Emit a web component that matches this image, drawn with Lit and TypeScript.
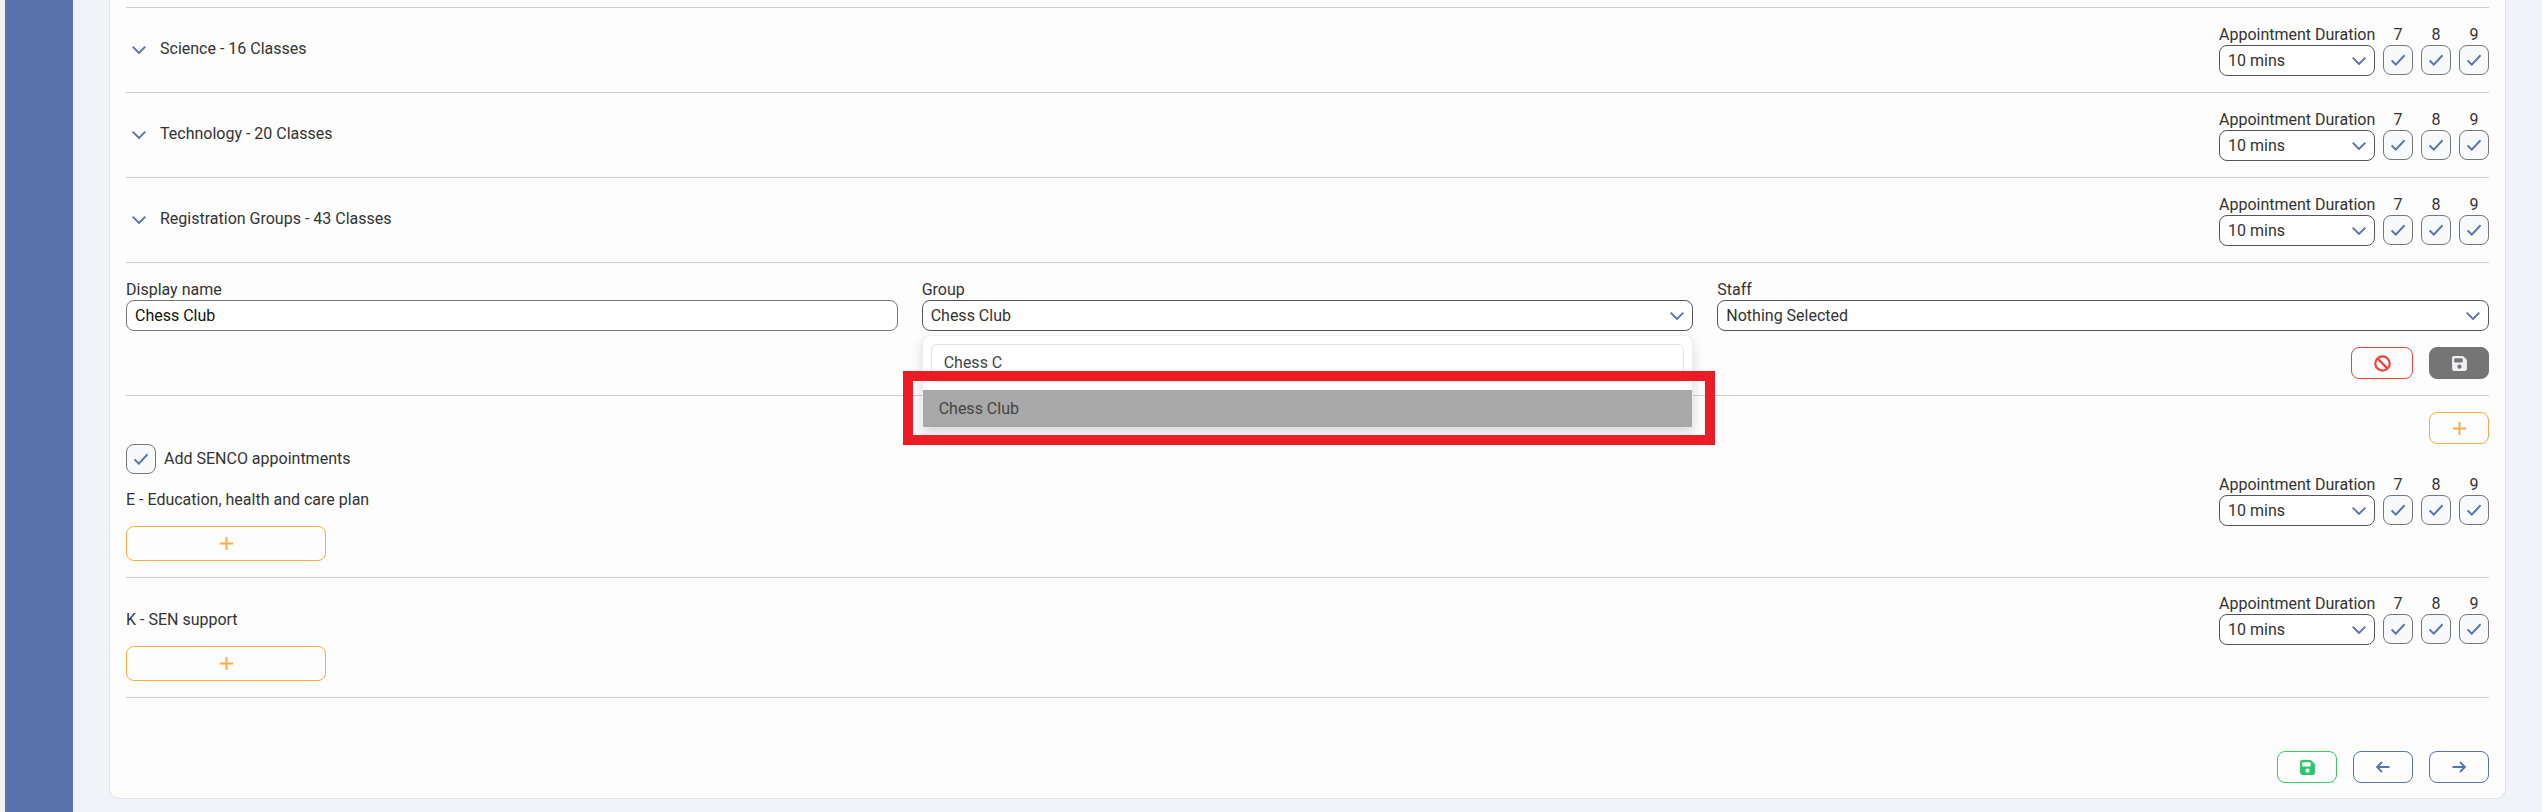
import { LitElement, html, css, svg } from "lit";
import { customElement } from "lit/decorators.js";

const chevron = html`<svg class="chev" viewBox="0 0 14 8" width="14" height="8"><path d="M.7 .7l6.3 6.3 6.3-6.3" fill="none" stroke="#5a73ae" stroke-width="1.9"/></svg>`;
const check = html`<svg viewBox="0 0 14 12" width="14" height="12"><path d="M.6 6.5l4.2 4.1L13.6 1.3" fill="none" stroke="#5a73ae" stroke-width="2"/></svg>`;
const plus = html`<svg viewBox="0 0 13 13" width="13" height="13"><path d="M6.5 0v13M0 6.5h13" fill="none" stroke="#f9ab45" stroke-width="1.9"/></svg>`;
const floppy = svg`<path fill-rule="evenodd" d="M64 32C28.7 32 0 60.7 0 96V416c0 35.3 28.7 64 64 64H384c35.3 0 64-28.7 64-64V173.3c0-17-6.7-33.3-18.7-45.3L352 50.7C340 38.7 323.7 32 306.7 32H64zm0 96c0-17.7 14.3-32 32-32H288c17.7 0 32 14.3 32 32v64c0 17.7-14.3 32-32 32H96c-17.7 0-32-14.3-32-32V128zM224 288a64 64 0 1 1 0 128 64 64 0 1 1 0-128z"/>`;

const box = html`<span class="box">${check}</span>`;

const duration = html`
  <div class="duration">
    <div class="dcol">
      <span class="lab">Appointment Duration</span>
      <div class="select small"><span>10 mins</span>${chevron}</div>
    </div>
    <div class="ccol"><span class="lab">7</span>${box}</div>
    <div class="ccol"><span class="lab">8</span>${box}</div>
    <div class="ccol"><span class="lab">9</span>${box}</div>
  </div>`;

@customElement("app-root")
export class AppRoot extends LitElement {
  static styles = css`
    :host { display: block; position: relative; width: 2542px; height: 812px; overflow: hidden; background: #f1f3f8;
      font-family: Roboto, "Liberation Sans", sans-serif; font-size: 16px; line-height: 19px; color: #333; }
    .page { display: flex; height: 812px; }
    .edge { width: 5px; background: #f3f3f3; flex: none; }
    .side { width: 68px; background: #5a73ae; flex: none; }
    .main { flex: 1; padding: 0 36px; min-width: 0; }
    .card { height: 799px; box-sizing: border-box; background: #fdfdfe; border: 1px solid #e1e3e7; border-top: 0;
      border-radius: 0 0 10px 10px; padding: 7px 16px 0; }
    .sec { border-top: 1px solid #ccc; }
    .row { height: 85px; display: flex; justify-content: space-between; box-sizing: border-box; padding-top: 17px; }
    .head { display: flex; align-items: center; height: 46px; padding-left: 6px; gap: 14px; }
    .head .chev { margin-top: 4px; }
    .duration { display: flex; gap: 8px; }
    .dcol { display: flex; flex-direction: column; width: 156px; }
    .ccol { display: flex; flex-direction: column; width: 30px; align-items: center; }
    .lab { height: 20px; white-space: nowrap; }
    .box { box-sizing: border-box; width: 30px; height: 30px; border: 1px solid #777; border-radius: 8px; background: #f8f9fb;
      display: flex; align-items: center; justify-content: center; flex: none; }
    .select { box-sizing: border-box; height: 31px; border: 1px solid #555; border-radius: 8px; background: #fff;
      display: flex; align-items: center; justify-content: space-between; padding: 0 8px; white-space: nowrap; }
    .select.input { border-color: #777; color: #111; }
    .form { padding: 17px 0 16px; }
    .grid { display: grid; grid-template-columns: repeat(3, minmax(0, 1fr)); gap: 24px; }
    .field { position: relative; display: flex; flex-direction: column; }
    .drop { position: absolute; left: 0; right: 0; top: 55px; height: 92px; box-sizing: border-box; background: #fff;
      border: 1px solid #eee; border-bottom: 0; border-radius: 8px 8px 0 0; box-shadow: 0 6px 12px rgba(0,0,0,.15); z-index: 2; }
    .search { box-sizing: border-box; height: 38px; margin: 8px 8px 0; border: 1px solid #e2e4e9; border-radius: 6px;
      padding: 8px 12px; color: #444; }
    .opt { position: absolute; left: 0; right: 0; bottom: 0; height: 37px; background: #a8a8a8; color: #444;
      display: flex; align-items: center; padding-left: 16px; }
    .callout { position: absolute; left: 903px; top: 371px; width: 812px; height: 74px; box-sizing: border-box;
      border: 10px solid #ed1c24; z-index: 3; }
    .actions { display: flex; justify-content: flex-end; gap: 16px; margin-top: 16px; }
    .btn { box-sizing: border-box; width: 60px; height: 32px; border: 1px solid; border-radius: 8px; background: transparent;
      display: flex; align-items: center; justify-content: center; flex: none; }
    .btn.cancel { width: 62px; border-color: #f44336; }
    .btn.dark { background: #757575; border-color: #757575; fill: #f0f0f2; }
    .btn.add { border-color: #f9ab45; }
    .btn.green { border-color: #3cc864; fill: #2cc76c; }
    .btn.blue { border-color: #5a73ae; }
    .wide { width: 200px; height: 35px; }
    .senco { padding-top: 16px; }
    .senco .top { display: flex; justify-content: flex-end; }
    .check { display: flex; align-items: center; gap: 8px; height: 30px; }
    .check span:last-child { padding-bottom: 2px; }
    .sen { display: flex; justify-content: space-between; padding: 0 0 16px; margin-top: 1px; }
    .sen.next { padding-top: 16px; margin-top: 0; border-top: 1px solid #ccc; }
    .sen .txt { margin: 15px 0 17px; }
    .sen.next .txt { margin: 16px 0 17px; }
    .foot { border-top: 1px solid #ccc; display: flex; justify-content: flex-end; gap: 16px; padding-top: 53px; }
  `;

  private headRow(t: string) {
    return html`<div class="sec row"><div class="head">${chevron}<span>${t}</span></div>${duration}</div>`;
  }

  render() {
    return html`
      <div class="page">
        <div class="edge"></div>
        <div class="side"></div>
        <div class="main">
          <div class="card">
            ${this.headRow("Science - 16 Classes")}
            ${this.headRow("Technology - 20 Classes")}
            ${this.headRow("Registration Groups - 43 Classes")}
            <div class="sec form">
              <div class="grid">
                <div class="field"><span class="lab">Display name</span><div class="select input"><span>Chess Club</span></div></div>
                <div class="field"><span class="lab">Group</span><div class="select"><span>Chess Club</span>${chevron}</div>
                  <div class="drop"><div class="search">Chess C</div><div class="opt">Chess Club</div></div>
                </div>
                <div class="field"><span class="lab">Staff</span><div class="select"><span>Nothing Selected</span>${chevron}</div></div>
              </div>
              <div class="actions">
                <span class="btn cancel"><svg viewBox="0 0 17 17" width="17" height="17"><circle cx="8.5" cy="8.5" r="7.2" fill="none" stroke="#f44336" stroke-width="2.2"/><path d="M3.4 3.4l10.2 10.2" stroke="#f44336" stroke-width="2.2"/></svg></span>
                <span class="btn dark"><svg viewBox="0 0 448 512" width="15" height="17">${floppy}</svg></span>
              </div>
            </div>
            <div class="sec senco">
              <div class="top"><span class="btn add">${plus}</span></div>
              <div class="check">${box}<span>Add SENCO appointments</span></div>
              <div class="sen">
                <div><div class="txt">E - Education, health and care plan</div><span class="btn add wide">${plus}</span></div>
                ${duration}
              </div>
              <div class="sen next">
                <div><div class="txt">K - SEN support</div><span class="btn add wide">${plus}</span></div>
                ${duration}
              </div>
            </div>
            <div class="foot">
              <span class="btn green"><svg viewBox="0 0 448 512" width="15" height="17">${floppy}</svg></span>
              <span class="btn blue"><svg viewBox="0 0 14 12" width="14" height="12"><path d="M13.5 6H1M6 1L1 6l5 5" fill="none" stroke="#5a73ae" stroke-width="1.9"/></svg></span>
              <span class="btn blue"><svg viewBox="0 0 14 12" width="14" height="12"><path d="M.5 6H13M8 1l5 5-5 5" fill="none" stroke="#5a73ae" stroke-width="1.9"/></svg></span>
            </div>
          </div>
        </div>
      </div>
      <div class="callout"></div>
    `;
  }
}
